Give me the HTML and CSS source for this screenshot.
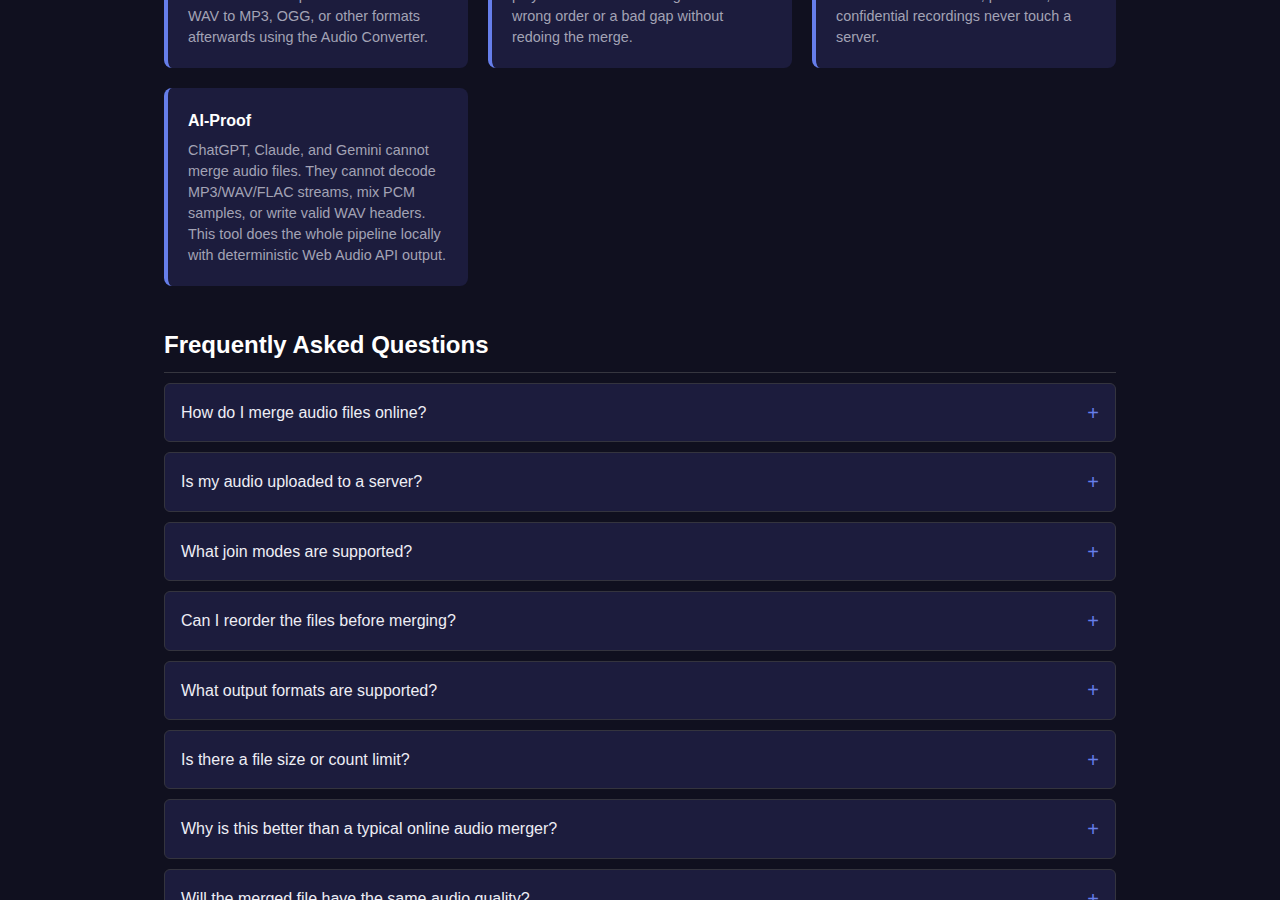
FILE: index.html
```html
<!DOCTYPE html>
<html lang="en">
<head>
<meta charset="utf-8">
<title>Audio Merger – Features &amp; FAQ</title>
<link rel="stylesheet" href="styles.css">
</head>
<body>
<main class="page">
  <section class="features">
    <article class="feature">
      <h3 class="feature-title">Lossless WAV Output</h3>
      <p class="feature-text">Output is always a 16-bit PCM WAV at the first file's sample rate. Convert the WAV to MP3, OGG, or other formats afterwards using the Audio Converter.</p>
    </article>
    <article class="feature">
      <h3 class="feature-title">Preview Before Download</h3>
      <p class="feature-text">Play the merged result in the built-in player before downloading. Catch a wrong order or a bad gap without redoing the merge.</p>
    </article>
    <article class="feature">
      <h3 class="feature-title">100% Private</h3>
      <p class="feature-text">Every file is decoded and mixed in your browser. Voice memos, podcasts, and confidential recordings never touch a server.</p>
    </article>
    <article class="feature">
      <h3 class="feature-title">AI-Proof</h3>
      <p class="feature-text">ChatGPT, Claude, and Gemini cannot merge audio files. They cannot decode MP3/WAV/FLAC streams, mix PCM samples, or write valid WAV headers. This tool does the whole pipeline locally with deterministic Web Audio API output.</p>
    </article>
  </section>

  <section class="faq">
    <h2 class="faq-heading">Frequently Asked Questions</h2>
    <div class="faq-list">
      <details class="faq-item"><summary class="faq-q"><span>How do I merge audio files online?</span><span class="faq-icon">+</span></summary></details>
      <details class="faq-item"><summary class="faq-q"><span>Is my audio uploaded to a server?</span><span class="faq-icon">+</span></summary></details>
      <details class="faq-item"><summary class="faq-q"><span>What join modes are supported?</span><span class="faq-icon">+</span></summary></details>
      <details class="faq-item"><summary class="faq-q"><span>Can I reorder the files before merging?</span><span class="faq-icon">+</span></summary></details>
      <details class="faq-item"><summary class="faq-q"><span>What output formats are supported?</span><span class="faq-icon">+</span></summary></details>
      <details class="faq-item"><summary class="faq-q"><span>Is there a file size or count limit?</span><span class="faq-icon">+</span></summary></details>
      <details class="faq-item"><summary class="faq-q"><span>Why is this better than a typical online audio merger?</span><span class="faq-icon">+</span></summary></details>
      <details class="faq-item"><summary class="faq-q"><span>Will the merged file have the same audio quality?</span><span class="faq-icon">+</span></summary></details>
    </div>
  </section>
</main>
</body>
</html>
```

FILE: styles.css
```css
* {
  box-sizing: border-box;
}

html,
body {
  margin: 0;
  padding: 0;
  background: #10101f;
}

body {
  font-family: "Liberation Sans", Arial, Helvetica, sans-serif;
  color: #e6e6f0;
}

.page {
  width: 952px;
  margin: -88px auto 0;
  padding-bottom: 40px;
}

/* Feature cards */
.features {
  display: grid;
  grid-template-columns: repeat(3, 1fr);
  gap: 20px;
}

.feature {
  background: #1c1c3d;
  border-left: 4px solid #667eea;
  border-radius: 8px;
  padding: 20px;
}

.feature-title {
  margin: 0 0 7px;
  padding-top: 1px;
  font-size: 16px;
  line-height: 24px;
  font-weight: 700;
  color: #ffffff;
}

.feature-text {
  margin: 0;
  font-size: 14.4px;
  line-height: 21px;
  color: #a3a3b5;
}

/* FAQ */
.faq {
  margin-top: 43px;
}

.faq-heading {
  margin: 0 0 10px;
  padding-top: 1px;
  padding-bottom: 13px;
  border-bottom: 1px solid #36363f;
  font-size: 24px;
  line-height: 29px;
  font-weight: 700;
  color: #ffffff;
}

.faq-list {
  display: flex;
  flex-direction: column;
  gap: 10px;
}

.faq-item {
  background: #1c1c3d;
  border: 1px solid #34343e;
  border-radius: 6px;
}

.faq-q {
  display: flex;
  align-items: center;
  justify-content: space-between;
  padding: 17px 16px;
  font-size: 16px;
  line-height: 23.4px;
  color: #eeeef5;
  cursor: pointer;
  list-style: none;
}

.faq-q::-webkit-details-marker {
  display: none;
}

.faq-icon {
  font-size: 20px;
  line-height: 1;
  color: #667eea;
}
```
